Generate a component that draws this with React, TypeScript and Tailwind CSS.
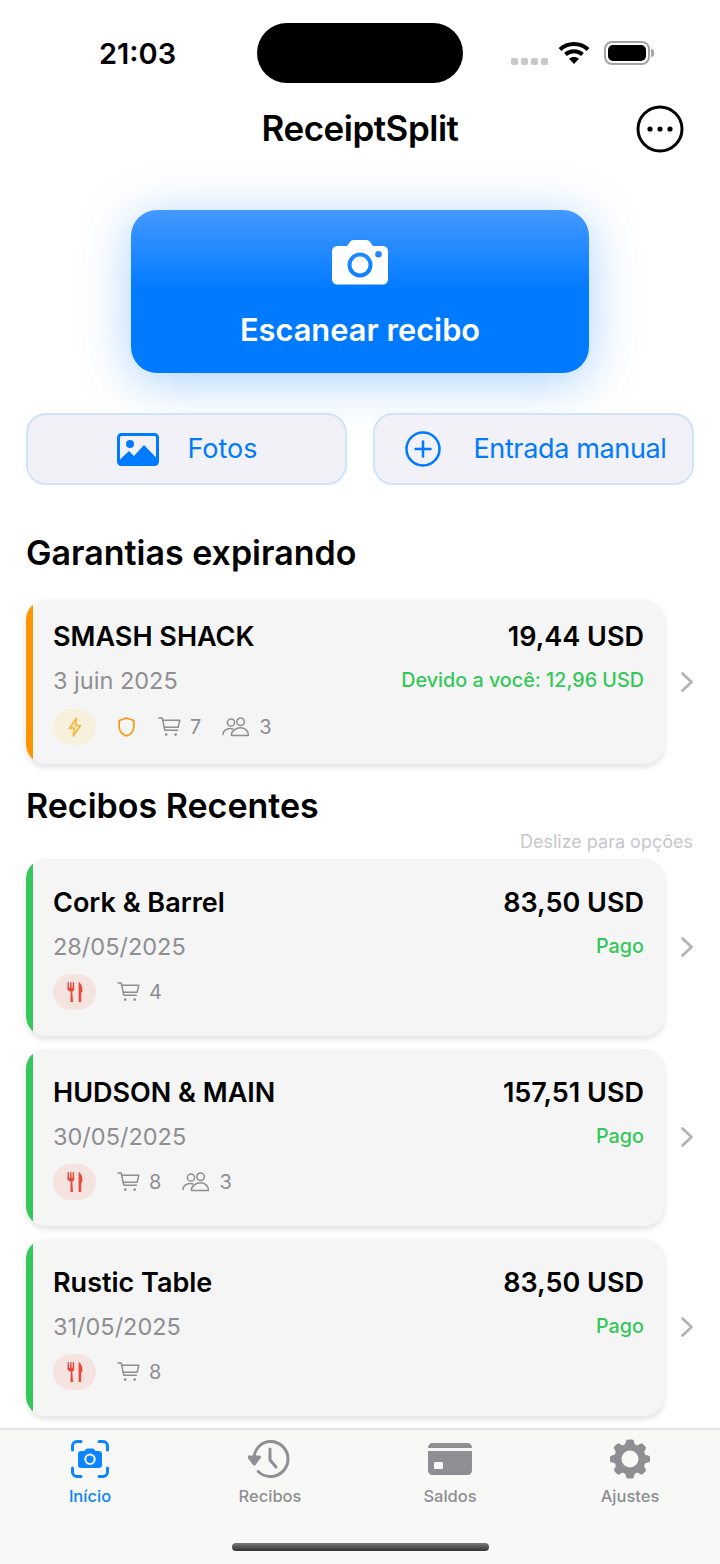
import type { ReactNode } from "react";

const CartIcon = () => (
  <svg width="24" height="22" viewBox="0 0 24 22" fill="none" stroke="#8e8e93" strokeWidth="1.5" strokeLinecap="round" strokeLinejoin="round">
    <path d="M1 2h3.2l2.6 12.2h12.6" />
    <path d="M4.800 4.200h17l-1.600 7H6.300" />
    <circle cx="8.200" cy="18.600" r="1.300" fill="#8e8e93" stroke="none" />
    <circle cx="17.600" cy="18.600" r="1.300" fill="#8e8e93" stroke="none" />
  </svg>
);

const PeopleIcon = () => (
  <svg width="28" height="20" viewBox="0 0 28 20" fill="none" stroke="#8e8e93" strokeWidth="1.5" strokeLinecap="round" strokeLinejoin="round">
    <circle cx="9" cy="5.500" r="3.600" />
    <circle cx="18.600" cy="4.800" r="3.800" />
    <path d="M1 17.600c0-3.600 3.400-6.200 7-6.200 1.200 0 2.200.2 3 .6" />
    <path d="M9.400 18.400h17c.4-4-3.200-7.600-7.800-7.600s-9.600 3.600-9.200 7.600z" />
  </svg>
);

const ForkKnife = () => (
  <svg width="16" height="22" viewBox="0 0 16 22" fill="#e8493d">
    <path d="M.6 1h1.200l.3 6h.8l.3-6h1.200l.3 6h.8l.3-6h1.200l.3 7c0 1.400-.9 2.200-2 2.600L6 21H3.400l.3-10.400C2.500 10.200.4 9.400.4 8z" />
    <path d="M11.600 21V1c2.600 1 3.900 4.600 3.900 9.400l-1.300 1.400V21z" />
  </svg>
);

const Bolt = () => (
  <svg width="14" height="20" viewBox="0 0 14 20" fill="none" stroke="#f5b942" strokeWidth="1.700" strokeLinejoin="round">
    <path d="M8.600 1 1.500 11.200h5L5.200 19l7.300-10.400h-5z" />
  </svg>
);

const Shield = () => (
  <svg width="17" height="20" viewBox="0 0 17 20" fill="none" stroke="#ff9500" strokeWidth="1.600" strokeLinejoin="round">
    <path d="M8.500 1 15.800 3.400v6.800c0 4-3.200 7-7.300 8.800-4.100-1.800-7.300-4.800-7.300-8.800V3.400z" />
  </svg>
);

const Chevron = () => (
  <svg width="14" height="22" viewBox="0 0 14 22" fill="none" stroke="#b4b4b8" strokeWidth="2.800" strokeLinecap="round" strokeLinejoin="round">
    <path d="M2.500 2.500 11.500 11l-9 8.500" />
  </svg>
);

function Pill({ bg, children }: { bg: string; children: ReactNode }) {
  return <div className={`flex h-[36px] w-[43px] items-center justify-center rounded-full ${bg}`}>{children}</div>;
}

interface ReceiptCardProps {
  name: string;
  date: string;
  amount: string;
  status: string;
  items: number;
  people?: number;
  warranty?: boolean;
}

function ReceiptCard({ name, date, amount, status, items, people, warranty }: ReceiptCardProps) {
  return (
    <div className="flex items-center">
      <div
        className={`flex w-[638px] overflow-hidden rounded-[20px] bg-[#f5f5f5] shadow-[0_3px_6px_rgba(0,0,0,0.12)] ${
          warranty ? "h-[164px]" : "h-[177px]"
        }`}
      >
        <div className={`w-[7px] shrink-0 ${warranty ? "bg-[#ff9500]" : "bg-[#34c759]"}`} />
        <div className={`flex flex-1 flex-col pl-[20px] pr-[20px] ${warranty ? "pt-[19px]" : "pt-[26px]"}`}>
          <div className="flex h-[34px] items-center justify-between text-[27px] font-semibold leading-none text-black">
            <span>{name}</span>
            <span>{amount}</span>
          </div>
          <div className="mt-[11px] flex h-[34px] items-center justify-between">
            <span className="text-[23.500px] leading-none text-[#8e8e93]">{date}</span>
            <span className="text-[19.750px] font-medium leading-none text-[#34c759]">{status}</span>
          </div>
          <div className={`flex h-[36px] items-center text-[20px] text-[#8e8e93] ${warranty ? "mt-[11px]" : "mt-[10px]"}`}>
            <Pill bg={warranty ? "bg-[#f7f0dc]" : "bg-[#f5e3e0]"}>{warranty ? <Bolt /> : <ForkKnife />}</Pill>
            {warranty && (
              <div className="ml-[22px]">
                <Shield />
              </div>
            )}
            <div className={`flex items-center gap-[8px] ${warranty ? "ml-[23px]" : "ml-[21px]"}`}>
              <CartIcon />
              <span>{items}</span>
            </div>
            {people !== undefined && (
              <div className="ml-[21px] flex items-center gap-[9px]">
                <PeopleIcon />
                <span>{people}</span>
              </div>
            )}
          </div>
        </div>
      </div>
      <div className={`ml-[16px] ${warranty ? "" : "-mt-[2px]"}`}>
        <Chevron />
      </div>
    </div>
  );
}

function TabItem({ label, active, children }: { label: string; active?: boolean; children: ReactNode }) {
  return (
    <div className={`flex w-[180px] flex-col items-center ${active ? "text-[#0a84ff]" : "text-[#8e8e93]"}`}>
      <div className="flex h-[42px] items-center justify-center">{children}</div>
      <span className="mt-[6px] text-[16.500px] font-medium leading-[20px]">{label}</span>
    </div>
  );
}

export default function App() {
  return (
    <div className="relative flex h-[1564px] w-[720px] flex-col overflow-hidden bg-white font-['Inter',sans-serif]">
      {/* status bar */}
      <div className="flex items-center pt-[23px]">
        <div className="w-[257px] pl-[99px] text-[29px] font-semibold leading-none text-black">21:03</div>
        <div className="h-[60px] w-[206px] rounded-[30px] bg-black" />
        <div className="flex items-center pl-[48px]">
          <div className="mt-[16px] flex gap-[3px]">
            <span className="h-[7px] w-[7px] rounded-[2px] bg-[#c8c8c8]" />
            <span className="h-[7px] w-[7px] rounded-[2px] bg-[#c8c8c8]" />
            <span className="h-[7px] w-[7px] rounded-[2px] bg-[#c8c8c8]" />
            <span className="h-[7px] w-[7px] rounded-[2px] bg-[#c8c8c8]" />
          </div>
          <svg className="-mt-[2px] ml-[10px]" width="32" height="23" viewBox="0 0 32 23" fill="none" stroke="#000" strokeWidth="4">
            <path d="M2 8.500C9.500 1 22.500 1 30 8.500" />
            <path d="M7.500 13.500c4.700-4.300 12.300-4.300 17 0" />
            <path d="M16 23l-5-5.200c2.800-2.300 7.200-2.300 10 0z" fill="#000" stroke="none" />
          </svg>
          <div className="-mt-[1px] ml-[14px] flex items-center">
            <div className="flex h-[24px] w-[46px] items-center rounded-[8px] border-2 border-[#a5a5a5] p-[2px]">
              <div className="h-full w-full rounded-[5px] bg-black" />
            </div>
            <div className="ml-[1px] h-[8px] w-[3px] rounded-r-full bg-[#a5a5a5]" />
          </div>
        </div>
      </div>

      {/* nav bar */}
      <div className="relative mt-[14px] flex h-[62px] items-center justify-center">
        <span className="text-[35px] font-semibold tracking-[-0.5px] text-black">ReceiptSplit</span>
        <svg className="absolute right-[36px] top-[8px]" width="48" height="48" viewBox="0 0 48 48" fill="none">
          <circle cx="24" cy="24" r="22" stroke="#000" strokeWidth="3" />
          <circle cx="14" cy="24" r="2.600" fill="#000" />
          <circle cx="24" cy="24" r="2.600" fill="#000" />
          <circle cx="34" cy="24" r="2.600" fill="#000" />
        </svg>
      </div>

      {/* hero button */}
      <div className="mt-[51px] flex justify-center">
        <div className="flex h-[163px] w-[458px] flex-col items-center rounded-[26px] bg-[linear-gradient(180deg,#4499ff_0%,#007aff_50%,#007aff_100%)] pt-[30px] shadow-[0_8px_50px_rgba(0,122,255,0.34)]">
          <svg width="56" height="45" viewBox="0 0 56 45" fill="#fff">
            <path
              fillRule="evenodd"
              d="M6 6h9l3-4c.8-1.200 2-2 3.500-2h13c1.500 0 2.700.8 3.500 2l3 4h9.500c3.300 0 5.500 2.200 5.500 5.500V39c0 3.500-2.200 5.500-5.500 5.500H6C2.500 44.500 0 42.500 0 39V11.500C0 8.200 2.500 6 6 6zm22 6.500a12.500 12.500 0 1 0 0 25 12.500 12.500 0 0 0 0-25zm0 4a8.500 8.500 0 1 1 0 17 8.500 8.500 0 0 1 0-17zM46.500 11a3.300 3.300 0 1 0 0 6.600 3.300 3.300 0 0 0 0-6.600z"
            />
          </svg>
          <span className="mt-[25px] text-[30.800px] font-[560] leading-[40px] text-white">Escanear recibo</span>
        </div>
      </div>

      {/* secondary buttons */}
      <div className="mt-[40px] flex gap-[26px] px-[26px]">
        <div className="flex h-[72px] w-[321px] items-center justify-center gap-[28px] rounded-[20px] border-2 border-[#cfe3fb] bg-[#f1f1f7] pl-[2px] text-[27px] text-[#007aff]">
          <svg width="42" height="33" viewBox="0 0 42 33" fill="none">
            <rect x="1.500" y="1.500" width="39" height="30" rx="3" stroke="#007aff" strokeWidth="3" />
            <circle cx="13" cy="11" r="4" fill="#007aff" />
            <path d="M1.500 28 12 18l5 5 10-11 13.500 14v3c0 1.500-1.500 3-3 3h-33c-1.500 0-3-1.500-3-3z" fill="#007aff" />
          </svg>
          <span>Fotos</span>
        </div>
        <div className="flex h-[72px] w-[321px] items-center justify-center gap-[32px] rounded-[20px] border-2 border-[#cfe3fb] bg-[#f1f1f7] pl-[5px] text-[27px] tracking-[-0.35px] text-[#007aff]">
          <svg width="36" height="36" viewBox="0 0 36 36" fill="none" stroke="#007aff" strokeWidth="2.500" strokeLinecap="round">
            <circle cx="18" cy="18" r="16.500" />
            <path d="M18 10.500v15M10.500 18h15" />
          </svg>
          <span>Entrada manual</span>
        </div>
      </div>

      {/* warranties */}
      <h2 className="mt-[46px] pl-[26px] text-[34px] font-semibold leading-[44px] text-black">Garantias expirando</h2>
      <div className="mt-[25px] pl-[26px]">
        <ReceiptCard name="SMASH SHACK" date="3 juin 2025" amount="19,44 USD" status="Devido a você: 12,96 USD" items={7} people={3} warranty />
      </div>

      {/* recent receipts */}
      <h2 className="mt-[20px] pl-[26px] text-[34px] font-semibold leading-[44px] text-black">Recibos Recentes</h2>
      <div className="flex h-[26px] items-center justify-end pr-[27px] text-[18px] text-[#c7c7cc]">Deslize para opções</div>
      <div className="flex flex-col gap-[13px] pl-[26px] pt-[5px]">
        <ReceiptCard name="Cork & Barrel" date="28/05/2025" amount="83,50 USD" status="Pago" items={4} />
        <ReceiptCard name="HUDSON & MAIN" date="30/05/2025" amount="157,51 USD" status="Pago" items={8} people={3} />
        <ReceiptCard name="Rustic Table" date="31/05/2025" amount="83,50 USD" status="Pago" items={8} />
      </div>

      {/* tab bar */}
      <div className="absolute bottom-0 left-0 h-[136px] w-full border-t-2 border-[#e4e4e4] bg-[#f8f9f7]">
        <div className="flex pt-[8px]">
          <TabItem label="Início" active>
            <svg width="38" height="38" viewBox="0 0 38 38" fill="none">
              <path d="M1.500 10V6c0-2.500 2-4.500 4.500-4.500h4M28 1.500h4c2.500 0 4.500 2 4.500 4.500v4M36.500 28v4c0 2.500-2 4.500-4.500 4.500h-4M10 36.500H6c-2.500 0-4.500-2-4.500-4.500v-4" stroke="#0a84ff" strokeWidth="3" strokeLinecap="round" />
              <path
                fillRule="evenodd"
                fill="#0a84ff"
                d="M10 11h3.500l1.300-1.800c.4-.5.9-.7 1.500-.7h5.400c.6 0 1.100.2 1.500.7l1.300 1.800H28c1.900 0 3 1.100 3 3v11c0 1.900-1.100 3-3 3H10c-1.900 0-3-1.100-3-3V14c0-1.900 1.100-3 3-3zm9 2.500a5.700 5.700 0 1 0 0 11.400 5.700 5.700 0 0 0 0-11.400zm0 2a3.700 3.700 0 1 1 0 7.400 3.700 3.700 0 0 1 0-7.400z"
              />
            </svg>
          </TabItem>
          <TabItem label="Recibos">
            <svg className="mr-[3px]" width="42" height="38" viewBox="0 0 42 38" fill="none" stroke="#8e8e93" strokeWidth="3" strokeLinecap="round" strokeLinejoin="round">
              <path d="M6 17C7.200 8.400 13.600 1.500 22.500 1.500c9.700 0 17.500 7.800 17.500 17.500s-7.800 17.500-17.500 17.500c-4.800 0-9-1.800-12.300-5" />
              <path d="M1 17h10.500l-5.200 7z" fill="#8e8e93" />
              <path d="M22 9v11l6 7" />
            </svg>
          </TabItem>
          <TabItem label="Saldos">
            <svg width="44" height="32" viewBox="0 0 44 32" fill="#8e8e93">
              <path d="M5 0h34c3 0 5 2 5 5H0c0-3 2-5 5-5z" />
              <path fillRule="evenodd" d="M0 8h44v19c0 3-2 5-5 5H5c-3 0-5-2-5-5zm7.500 11c-1 0-1.500.5-1.500 1.500v4c0 1 .5 1.500 1.500 1.500h6c1 0 1.500-.5 1.500-1.500v-4c0-1-.5-1.500-1.500-1.500z" />
            </svg>
          </TabItem>
          <TabItem label="Ajustes">
            <svg width="40" height="40" viewBox="0 0 40 40" fill="#8e8e93">
              <path
                fillRule="evenodd"
                d="M16.500 1c.5-.7 6.500-.7 7 0l1.300 4.300 2.600 1.100 4-2.100c.8-.2 5 4 4.800 4.800l-2.100 4 1.100 2.600 4.300 1.300c.7.500.7 5.500 0 6l-4.300 1.300-1.100 2.600 2.100 4c.2.800-4 5-4.800 4.800l-4-2.100-2.600 1.100-1.300 4.300c-.5.700-6.500.7-7 0l-1.300-4.300-2.600-1.100-4 2.100c-.8.200-5-4-4.800-4.800l2.100-4-1.100-2.600L.4 23c-.7-.5-.7-5.500 0-6l4.300-1.300 1.100-2.600-2.100-4c-.2-.8 4-5 4.800-4.800l4 2.100 2.600-1.100zM20 11.500a8.500 8.500 0 1 0 0 17 8.500 8.500 0 0 0 0-17z"
              />
            </svg>
          </TabItem>
        </div>
        <div className="absolute bottom-[13px] left-[232px] h-[8px] w-[257px] rounded-full bg-[linear-gradient(180deg,#777,#333)]" />
      </div>
    </div>
  );
}
